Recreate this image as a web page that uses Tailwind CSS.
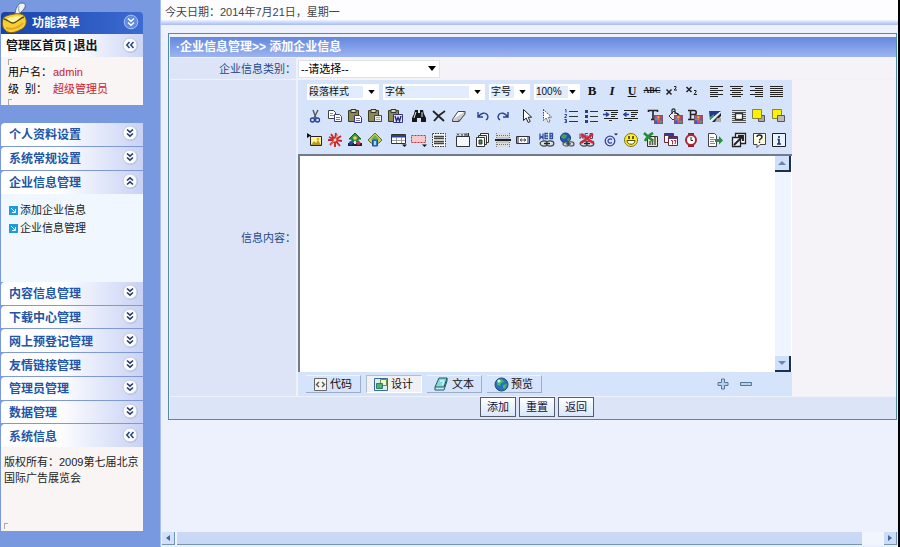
<!DOCTYPE html>
<html lang="zh-CN">
<head>
<meta charset="utf-8">
<meta name="viewport" content="width=device-width, initial-scale=1">
<title>企业信息管理</title>
<script src="https://cdn.jsdelivr.net/npm/@tailwindcss/browser@4"></script>
</head>
<body class="flex min-h-screen bg-[#edf1fd] font-['Liberation_Sans','Noto_Sans_CJK_SC',sans-serif] text-[11px] leading-4 text-[#333]">

<!-- Shared shapes -->
<svg class="hidden" aria-hidden="true">
  <symbol id="down" viewBox="0 0 16 16"><circle cx="8.5" cy="8.5" r="7.3" fill="#a9b4d6"/><circle cx="8" cy="8" r="7" fill="#fbfcff" stroke="#c3cbe6"/><path d="M5 4.5l3 2.7 3-2.7M5 8.5l3 2.7 3-2.7" fill="none" stroke="#2b3a66" stroke-width="1.6"/></symbol>
  <symbol id="up" viewBox="0 0 16 16"><circle cx="8.5" cy="8.5" r="7.3" fill="#a9b4d6"/><circle cx="8" cy="8" r="7" fill="#fbfcff" stroke="#c3cbe6"/><path d="M5 7.5l3-2.7 3 2.7M5 11.5l3-2.7 3 2.7" fill="none" stroke="#2b3a66" stroke-width="1.6"/></symbol>
  <symbol id="left" viewBox="0 0 16 16"><circle cx="8.5" cy="8.5" r="7.3" fill="#a9b4d6"/><circle cx="8" cy="8" r="7" fill="#fbfcff" stroke="#c3cbe6"/><path d="M7.5 5l-2.7 3 2.7 3M11.5 5l-2.7 3 2.7 3" fill="none" stroke="#2b4a86" stroke-width="1.6"/></symbol>
  <symbol id="tri" viewBox="0 0 8 5"><path d="M0 0h8L4 5z" fill="#000"/></symbol>
  <symbol id="bullet" viewBox="0 0 9 9"><path d="M0 0h9v9H0z" fill="#1c9be0"/><path d="M2 2l4 4M6.5 3v3.5H3" fill="none" stroke="#fff"/></symbol>
  <symbol id="swatch" viewBox="0 0 8 8"><path d="M0 0h8v8H0z" fill="#7a5a6a"/><path d="M1 1h2v2H1z" fill="#f03a9a"/><path d="M3 1h2v2H3z" fill="#e8c040"/><path d="M5 1h2v2H5z" fill="#e04030"/><path d="M1 3h2v2H1z" fill="#40a8a0"/><path d="M3 3h2v2H3z" fill="#f07830"/><path d="M5 3h2v2H5z" fill="#a03ad0"/><path d="M1 5h2v2H1z" fill="#3858d8"/><path d="M3 5h2v2H3z" fill="#e840b0"/><path d="M5 5h2v2H5z" fill="#40b050"/></symbol>
  <symbol id="clip" viewBox="0 0 16 16"><path d="M1.5 2.5h10v11h-10z" fill="#8c8a52" stroke="#3c3c28"/><path d="M4 1.5h5v3H4z" fill="#d8d8b0" stroke="#333"/></symbol>
  <symbol id="chain" viewBox="0 0 16 8"><g fill="#ddd" fill-opacity=".5" stroke="#444" stroke-width="1.3"><ellipse cx="5" cy="4.5" rx="3.8" ry="2.6"/><ellipse cx="11" cy="4.5" rx="3.8" ry="2.6"/></g><path d="M5 4.5h6" stroke="#222" stroke-width="1.3"/></symbol>
</svg>

<aside class="flex w-40 shrink-0 flex-col bg-[#7898df] pt-3 pr-[17px] pb-4 pl-px">
  <header class="relative flex h-[22px] items-center justify-between rounded-t-sm bg-linear-to-r from-[#1742ac] to-[#3e6bd0] pr-1 pl-[31px]">
    <svg class="absolute -top-2.5 left-0 h-8 w-7" viewBox="0 0 28 32"><path d="M14 13C14 7 17 1 21 1s4 3 2 6-5 4-7 7" fill="#eef3f8" stroke="#56657c"/><path d="M18 4c-1 3 0 6 1 7" fill="none" stroke="#8a98aa"/><path d="M2 17c1-3 6-4 11-5 6-1 11 0 12 5s-1 9-6 11c-5 3-12 4-15 0-3-3-3-7-2-11z" fill="#f5cf35" stroke="#755c12"/><path d="M4 18c3-3 13-5 18-3-3 1-6 6-10 6-3 0-5-2-8-3z" fill="#fff39b"/><path d="M3 17c4 1 6 4 9 4s7-5 11-6" fill="none" stroke="#594a12" stroke-width="1.3"/><path d="M5 26c5 2 13 0 17-5" fill="none" stroke="#e4a91c" stroke-width="2"/></svg>
    <h1 class="text-xs font-bold text-white">功能菜单</h1>
    <button type="button" aria-label="收起功能菜单"><svg class="mb-0.5 size-4" viewBox="0 0 16 16"><circle cx="8" cy="8" r="6.8" fill="#5f8be0" stroke="#a9c3f5"/><path d="M5 4.5l3 2.7 3-2.7M5 8.5l3 2.7 3-2.7" fill="none" stroke="#fff" stroke-width="1.5"/></svg></button>
  </header>
  <nav class="flex h-[23px] items-center bg-linear-to-r from-white from-50% to-[#ccd5f5] pr-[5px] pl-[5px] text-xs font-bold text-[#151520]">
    <a href="#home">管理区首页</a><span class="px-0.5">|</span><a href="#logout">退出</a>
    <button type="button" class="ml-auto" aria-label="收起"><svg class="mb-0.5 size-4"><use href="#left"/></svg></button>
  </nav>
  <section class="relative h-12 bg-[#f9f5f4] px-[7px] pt-[7px] text-black">
    <span class="absolute top-0.5 left-[7px] h-1.5 w-1 border-t border-l border-[#aaa]"></span>
    <dl class="grid grid-cols-[45px_1fr] leading-[17px]">
      <dt>用户名：</dt><dd class="text-[#d02030]">admin</dd>
      <dt>级 &nbsp;别：</dt><dd class="text-[#d02030]">超级管理员</dd>
    </dl>
    <span class="absolute bottom-0 left-[7px] h-1.5 w-1 border-t border-l border-[#aaa]"></span>
  </section>

  <div class="mt-[18px] flex h-[71px] flex-col text-xs font-bold text-[#2255a8] [&>button]:flex [&>button]:flex-1 [&>button]:items-center [&>button]:justify-between [&>button]:rounded-tl-sm [&>button]:border-b [&>button]:border-[#7f98dc] [&>button]:bg-linear-to-r [&>button]:from-white [&>button]:from-40% [&>button]:to-[#c9d2f4] [&>button]:pt-px [&>button]:pr-[5px] [&>button]:pl-2 [&_svg]:mb-1 [&_svg]:size-4">
    <button type="button">个人资料设置<svg><use href="#down"/></svg></button>
    <button type="button">系统常规设置<svg><use href="#down"/></svg></button>
    <button type="button" class="border-b-0!">企业信息管理<svg><use href="#up"/></svg></button>
  </div>
  <ul class="h-[88px] bg-[#f1f7fe] px-2 pt-[7px] leading-[18px] text-[#222]">
    <li><a href="#add" class="flex items-center gap-0.5"><svg class="size-[9px]"><use href="#bullet"/></svg>添加企业信息</a></li>
    <li><a href="#manage" class="flex items-center gap-0.5"><svg class="size-[9px]"><use href="#bullet"/></svg>企业信息管理</a></li>
  </ul>
  <div class="flex h-[165px] flex-col text-xs font-bold text-[#2255a8] [&>button]:flex [&>button]:flex-1 [&>button]:items-center [&>button]:justify-between [&>button]:rounded-tl-sm [&>button]:border-b [&>button]:border-[#7f98dc] [&>button]:bg-linear-to-r [&>button]:from-white [&>button]:from-40% [&>button]:to-[#c9d2f4] [&>button]:pt-0.5 [&>button]:pr-[5px] [&>button]:pl-2 [&_svg]:mb-1 [&_svg]:size-4">
    <button type="button">内容信息管理<svg><use href="#down"/></svg></button>
    <button type="button">下载中心管理<svg><use href="#down"/></svg></button>
    <button type="button">网上预登记管理<svg><use href="#down"/></svg></button>
    <button type="button">友情链接管理<svg><use href="#down"/></svg></button>
    <button type="button">管理员管理<svg><use href="#down"/></svg></button>
    <button type="button">数据管理<svg><use href="#down"/></svg></button>
    <button type="button" class="border-b-0!">系统信息<svg><use href="#left"/></svg></button>
  </div>
  <footer class="relative grow bg-[#f9f5f4] px-[3px] pt-[7px] text-[#222]">
    <p>版权所有：2009第七届北京国际广告展览会</p>
    <span class="absolute bottom-0.5 left-[3px] h-1.5 w-1 border-t border-l border-[#aaa]"></span>
  </footer>
</aside>

<main class="flex min-w-0 grow flex-col border-r-2 border-l border-r-black border-l-[#a9bdf0]">
  <div class="h-5 bg-[#fdfdff] px-1 pt-1 text-[#444]">今天日期：2014年7月21日，星期一</div>
  <div class="h-[5px] bg-linear-to-b from-[#eef3fd] to-[#a5bbf3]"></div>

  <form class="mt-2 mr-px ml-[7px] border border-[#4f8bab] bg-[#edf2fd] pt-[3px] pl-px">
    <h2 class="flex h-5 items-center bg-linear-to-b from-[#6487df] to-[#9db4f0] px-1.5 text-xs font-bold text-white">·企业信息管理&gt;&gt; 添加企业信息</h2>

    <div class="mt-px grid grid-cols-[126px_1fr] gap-x-0.5 gap-y-px">
      <label for="category" class="flex h-[21px] items-center justify-end bg-[#dde4f8] text-[#234a8a]">企业信息类别：</label>
      <div class="flex items-center bg-[#f5f3f8]">
        <div class="relative flex h-[18px] w-[142px] items-center border border-[#dde2ee] bg-white">
          <select id="category" class="h-full w-full appearance-none px-0.5 pb-0.5 text-black"><option>--请选择--</option></select>
          <svg class="pointer-events-none absolute right-[3px] h-[5px] w-2"><use href="#tri"/></svg>
        </div>
      </div>

      <label for="content" class="flex items-center justify-end bg-[#dde4f8] text-[#234a8a]">信息内容：</label>
      <div class="bg-[#f5f3f8]">
        <div class="w-[494px] bg-[#d5e3fb]">
          <div class="h-[74px] pl-[7px] [&_button]:flex [&_button]:h-6 [&_button]:w-5 [&_button]:items-center [&_button]:justify-center [&_svg]:shrink-0" role="toolbar" aria-label="编辑工具">
            <div class="flex h-6 items-center pl-0.5 text-[10px] text-[#111] [&_button]:pb-0.5 [&_button_svg]:size-4">
              <div class="mr-0.5 flex gap-1 [&>div]:relative [&>div]:flex [&>div]:h-4 [&>div]:items-center [&>div]:bg-white [&>div]:pl-0.5 [&_select]:h-3 [&_select]:grow [&_select]:appearance-none [&_select]:bg-[#e1edfc] [&_select]:pr-3 [&_select]:leading-3 [&_svg]:pointer-events-none [&_svg]:absolute [&_svg]:right-1 [&_svg]:h-1 [&_svg]:w-[7px]">
                <div class="w-[72px]"><select aria-label="段落样式" class="mr-4 w-10 pr-0!"><option>段落样式</option></select><svg><use href="#tri"/></svg></div>
                <div class="w-[102px]"><select aria-label="字体" class="mr-4"><option>字体</option></select><svg><use href="#tri"/></svg></div>
                <div class="w-[41px]"><select aria-label="字号" class="mr-4 w-5 pr-0!"><option>字号</option></select><svg><use href="#tri"/></svg></div>
                <div class="w-[46px]"><select aria-label="缩放" class="mr-3 w-7 pr-0!"><option>100%</option></select><svg><use href="#tri"/></svg></div>
              </div>
              <button type="button" aria-label="粗体"><b class="font-['Liberation_Serif',serif] text-[13px]">B</b></button>
              <button type="button" aria-label="斜体"><b class="font-['Liberation_Serif',serif] text-[13px] italic">I</b></button>
              <button type="button" aria-label="下划线"><b class="font-['Liberation_Serif',serif] text-xs underline">U</b></button>
              <button type="button" aria-label="删除线"><b class="font-['Liberation_Serif',serif] text-[8px] line-through">ABC</b></button>
              <button type="button" aria-label="上标"><svg viewBox="0 0 16 16" fill="none" stroke="#222"><path d="M2.500 6.500l5 5m0-5l-5 5" stroke-width="1.5"/><path d="M10 3.500h2v1.500l-2 2h3"/></svg></button>
              <button type="button" aria-label="下标"><svg viewBox="0 0 16 16" fill="none" stroke="#222"><path d="M2.500 4l5 5m0-5l-5 5" stroke-width="1.5"/><path d="M10 7.500h2V9l-2 2.500h3"/></svg></button>
              <button type="button" aria-label="左对齐" class="ml-1"><svg viewBox="0 0 16 16"><path d="M2 3.500h13M2 5.500h8M2 7.500h13M2 9.500h8M2 11.500h13M2 13.500h8" stroke="#222"/></svg></button>
              <button type="button" aria-label="居中"><svg viewBox="0 0 16 16"><path d="M2 3.500h13M4 5.500h9M2 7.500h13M4 9.500h9M2 11.500h13M4 13.500h9" stroke="#222"/></svg></button>
              <button type="button" aria-label="右对齐"><svg viewBox="0 0 16 16"><path d="M2 3.500h13M7 5.500h8M2 7.500h13M7 9.500h8M2 11.500h13M7 13.500h8" stroke="#222"/></svg></button>
              <button type="button" aria-label="两端对齐"><svg viewBox="0 0 16 16"><path d="M2 3.500h13M2 5.500h13M2 7.500h13M2 9.500h13M2 11.500h13M2 13.500h13" stroke="#222"/></svg></button>
            </div>

            <div class="flex gap-1 [&>div]:flex [&_svg]:size-4">
              <div>
                <button type="button" aria-label="剪切"><svg viewBox="0 0 16 16" fill="none"><path d="M6 2l3 8M11 2L7 10" stroke="#555" stroke-width="1.4"/><circle cx="5.500" cy="12" r="2" stroke="#27408f" stroke-width="1.3"/><circle cx="10.500" cy="12" r="2" stroke="#27408f" stroke-width="1.3"/></svg></button>
                <button type="button" aria-label="复制"><svg viewBox="0 0 16 16" fill="#fff" stroke="#444"><path d="M1.500 2.500h5l2 2v6h-7z"/><path d="M3 5.500h3M3 7.500h4" stroke="#888"/><path d="M7.500 6.500h5l2 2v5h-7z" stroke="#3b3b80"/><path d="M9 9.500h4M9 11.500h4" stroke="#7778b0"/></svg></button>
                <button type="button" aria-label="粘贴"><svg viewBox="0 0 16 16"><use href="#clip" width="16" height="16"/><path d="M7.500 7.500h5l2 2v5h-7z" fill="#fff" stroke="#34347c"/><path d="M9 10.500h4M9 12.500h4" stroke="#7778b0"/></svg></button>
                <button type="button" aria-label="粘贴文本"><svg viewBox="0 0 16 16"><use href="#clip" width="16" height="16"/><path d="M7.500 7.500h7v6h-7z" fill="#eee" stroke="#444"/><path d="M9 9.500h4M9 11.500h4" stroke="#aaa"/></svg></button>
                <button type="button" aria-label="从 Word 粘贴"><svg viewBox="0 0 16 16"><use href="#clip" width="16" height="16"/><path d="M6.500 6.500h9v8h-9z" fill="#e5e5ff" stroke="#34347c"/><path d="M8 8l1.500 5L11 9.500l1.500 3.500L14 8" fill="none" stroke="#27277c" stroke-width="1.4"/></svg></button>
              </div>
              <div>
                <button type="button" aria-label="查找"><svg viewBox="0 0 16 16"><path d="M4 2h3v3h2V2h3l1 4 2 4v4h-5v-4H6v4H1v-4l2-4z" fill="#171717"/><path d="M5 4L3 10M11 4v5" stroke="#ddd"/></svg></button>
                <button type="button" aria-label="删除"><svg viewBox="0 0 16 16"><path d="M2 3l11 10M14 3C9 6 6 9 3 13" fill="none" stroke="#222" stroke-width="1.8"/></svg></button>
                <button type="button" aria-label="清除格式"><svg viewBox="0 0 16 16" fill="#fff" stroke="#444"><path d="M7 3.500h7l-6 8H1.500z"/><path d="M1.500 11.500v2H8l6-7.500V3.500M8 11.500v2" fill="#ccc"/></svg></button>
              </div>
              <div>
                <button type="button" aria-label="撤销"><svg viewBox="0 0 16 16" fill="none" stroke="#27408f" stroke-width="1.400"><path d="M3 4v5h5M3.500 8.500C6 5 10 4 12 6.500S12.500 11 11 12"/></svg></button>
                <button type="button" aria-label="重做"><svg viewBox="0 0 16 16" fill="none" stroke="#27408f" stroke-width="1.400"><path d="M13 4v5H8M12.500 8.500C10 5 6 4 4 6.500S3.500 11 5 12"/></svg></button>
              </div>
              <div>
                <button type="button" aria-label="选择"><svg viewBox="0 0 16 16"><path d="M4.500 1.500v11l2.700-2.500 2 4.500 2-1-2-4.300h3.500z" fill="#fff" stroke="#222"/></svg></button>
                <button type="button" aria-label="取消选择"><svg viewBox="0 0 16 16"><path d="M4.500 1.500v11l2.700-2.500 2 4.500 2-1-2-4.300h3.500z" fill="#fff" stroke="#444" stroke-dasharray="1.500 1"/></svg></button>
              </div>
              <div>
                <button type="button" aria-label="编号列表"><svg viewBox="0 0 16 16"><path d="M6 3.500h9M6 8.500h9M6 13.500h9" stroke="#333"/><path d="M2 1.500h1v3M1.500 6.500h2v1.500l-2 1.500h2M1.500 11.500h2v3h-2M2 13h1.500" fill="none" stroke="#27408f"/></svg></button>
                <button type="button" aria-label="项目符号"><svg viewBox="0 0 16 16"><path d="M7 3.500h8M7 8.500h8M7 13.500h8" stroke="#333"/><path d="M2 2h3v3H2zM2 7h3v3H2zM2 12h3v3H2z" fill="#27408f"/></svg></button>
                <button type="button" aria-label="增加缩进"><svg viewBox="0 0 16 16"><path d="M1 2.500h14M8 4.500h7M8 6.500h6M8 8.500h4M1 10.500h14M6 12.500h3" stroke="#222" stroke-width="1.200"/><path d="M0 6.500h5M3 4.500l2.500 2L3 8.500" fill="none" stroke="#27408f" stroke-width="1.600"/></svg></button>
                <button type="button" aria-label="减少缩进"><svg viewBox="0 0 16 16"><path d="M1 2.500h14M8 4.500h7M8 6.500h6M8 8.500h4M1 10.500h14M6 12.500h3" stroke="#222" stroke-width="1.200"/><path d="M6 6.500H1M3.500 4.500L1 6.500l2.500 2" fill="none" stroke="#27408f" stroke-width="1.600"/></svg></button>
              </div>
              <div>
                <button type="button" aria-label="文字颜色"><svg viewBox="0 0 16 16"><path d="M1.500 4V2.500h9V4M6 2.500V11M4 11.500h4" fill="none" stroke="#222" stroke-width="1.600"/><use href="#swatch" x="7" y="7" width="9" height="9"/></svg></button>
                <button type="button" aria-label="背景颜色"><svg viewBox="0 0 16 16"><path d="M7 3L2 8l4 4 5-5z" fill="#eee" stroke="#333"/><path d="M5 6V2c0-1.500 3-1.500 3 0v4M9 5c3 1 3 2 3 4" fill="none" stroke="#222" stroke-width="1.200"/><use href="#swatch" x="7" y="7" width="9" height="9"/></svg></button>
                <button type="button" aria-label="文字底色"><svg viewBox="0 0 16 16"><path d="M1 2.500h6c3 0 3 4 0 4H4M3.500 2.500V11M1 11.500h6c3.500 0 3.500-5 0-5" fill="none" stroke="#222" stroke-width="1.500"/><use href="#swatch" x="7" y="7" width="9" height="9"/></svg></button>
                <button type="button" aria-label="背景图片"><svg viewBox="0 0 16 16"><path d="M2 3h12L3 12z" fill="#23378d"/><path d="M3 9l4-3v3l-4 4z" fill="#3aa04a"/><path d="M13 4L3 13" stroke="#fff"/><path d="M14 5v3L8 14H5z" fill="#222"/><path d="M10 10h4v4H8z" fill="#aaa"/></svg></button>
              </div>
              <div>
                <button type="button" aria-label="图文混排"><svg viewBox="0 0 16 16"><path d="M1 2.500h14M1 4.500h14M1 6.500h3M12 6.500h3M1 8.500h3M12 8.500h3M1 10.500h3M12 10.500h3M1 12.500h14M1 14.500h14" stroke="#555"/><path d="M4.500 5.500h7v6h-7z" fill="#fff" stroke="#333" stroke-width="1.300"/></svg></button>
                <button type="button" aria-label="上移一层"><svg viewBox="0 0 16 16"><path d="M7.500 7.500h6v6h-6z" fill="#aaa" stroke="#555"/><path d="M1.500 1.500h9v9h-9z" fill="#fff200" stroke="#85823a"/></svg></button>
                <button type="button" aria-label="下移一层"><svg viewBox="0 0 16 16"><path d="M1.500 1.500h9v9h-9z" fill="#fff200" stroke="#85823a"/><path d="M6.500 7.500h7v6h-7z" fill="#bbb" stroke="#555"/></svg></button>
              </div>
            </div>

            <div class="flex gap-1 [&>div]:flex [&_svg]:size-4">
              <div>
                <button type="button" aria-label="插入图片"><svg viewBox="0 0 16 16"><path d="M0 1l4 2.500L0 6z" fill="#111"/><path d="M3.500 4.500h11v9h-11z" fill="#fff4a0" stroke="#222"/><path d="M4 13l3-4 2 2 2-3 3 5z" fill="#b99b1c"/><circle cx="11" cy="7" r="1.300" fill="#e3b100"/><path d="M1 3.500h3" stroke="#111"/></svg></button>
                <button type="button" aria-label="插入 Flash"><svg viewBox="0 0 16 16"><path d="M8 8L4 2M8 8l1-7M8 8l6-4M8 8l7 1M8 8l5 6M8 8l0 7M8 8l-5 5M8 8L1 8M8 8L2 5" stroke="#cf2626" stroke-width="1.900"/><path d="M8 8l3-6M8 8l-5 6" stroke="#f38c72"/><circle cx="8" cy="8" r="1.500" fill="#ffe3d0"/></svg></button>
                <button type="button" aria-label="插入媒体"><svg viewBox="0 0 16 16"><path d="M8 1l6 6h-3v3H5V7H2z" fill="#2f9c45" stroke="#1c5427"/><path d="M1 11h14v3H1z" fill="#222"/><circle cx="8" cy="6" r="1.800" fill="#f2d13b"/><circle cx="4" cy="11" r="2" fill="#2743b6"/><circle cx="11.500" cy="11" r="2" fill="#d2304a"/><path d="M7 9h2v3H7z" fill="#f0ede0"/></svg></button>
                <button type="button" aria-label="插入文件"><svg viewBox="0 0 16 16"><path d="M8 1l7 7-3 3H4L1 8z" fill="#c6cf4c" stroke="#63702d"/><path d="M8 3l4 4-4 2-4-2z" fill="#6fae4e"/><path d="M5.500 8h5v6h-5z" fill="#2b7ed3" stroke="#1c4f98"/><path d="M8 9v4" stroke="#fff" stroke-width="1.300"/></svg></button>
              </div>
              <div>
                <button type="button" aria-label="表格菜单"><svg viewBox="0 0 16 16"><path d="M.500 2.500h14v9H.500z" fill="#fff" stroke="#333"/><path d="M1 3h13v2.500H1z" fill="#2b3f91"/><path d="M1 8.500h13M5.500 5v6M10.500 5v6" stroke="#999"/><path d="M11 12.500h5L13.500 15z" fill="#111"/></svg></button>
                <button type="button" aria-label="表单菜单"><svg viewBox="0 0 16 16"><path d="M.500 3.500h14v7H.500z" fill="#f8c7c9" stroke="#b53a42" stroke-dasharray="2 1"/><path d="M11 12.500h5L13.500 15z" fill="#111"/></svg></button>
                <button type="button" aria-label="显示边框"><svg viewBox="0 0 16 16"><path d="M1.500 1.500h13v13h-13z" fill="#fff" stroke="#333" stroke-dasharray="1.500 1"/><path d="M3 4.500h10M3 6.500h10M3 9.500h10M3 11.500h10" stroke="#444" stroke-width="1.300"/></svg></button>
              </div>
              <div>
                <button type="button" aria-label="插入区域"><svg viewBox="0 0 16 16"><path d="M1.500 4.500h13v10h-13z" fill="#f3f8ff" stroke="#333"/><path d="M2 1.500l2 2m0-2l-2 2M6 1.500l1 1 1-1M7 2.500v2M10 4V1.500l1 1 1-1V4M13.500 1v3" fill="none" stroke="#333"/></svg></button>
                <button type="button" aria-label="复制页面"><svg viewBox="0 0 16 16" stroke="#333"><path d="M5.500 1.500h8v9h-8z" fill="#fff"/><path d="M3.500 3.500h8v9h-8z" fill="#e9edda"/><path d="M1.500 5.500h8v9h-8z" fill="#fff"/><path d="M4 12V8h3v4z" fill="#4d8a50"/></svg></button>
                <button type="button" aria-label="分页符"><svg viewBox="0 0 16 16"><path d="M1.500 1v5h13V1M1.500 15v-5h13v5" fill="#ddd" stroke="#777" stroke-dasharray="1 1"/><path d="M2 3.500h12M2 12.500h12" stroke="#777" stroke-dasharray="1 1"/><path d="M0 8h16" stroke="#222" stroke-width="2"/></svg></button>
                <button type="button" aria-label="分隔栏"><svg viewBox="0 0 16 16"><path d="M1.500 4.500h13v7h-13z" fill="#fff" stroke="#333"/><path d="M2 5h2v6H2zM12 5h2v6h-2z" fill="#898abd"/><path d="M5 8h6M7 6.500L5 8l2 1.500M9 6.500L11 8l-2 1.500" fill="none" stroke="#555"/></svg></button>
              </div>
              <div>
                <button type="button" aria-label="插入链接"><svg viewBox="0 0 16 16"><path d="M1 1.500v5l1.500-2L4 6.500v-5M9 1.500H6v5h3M6 4h3M11 1.500v5h2.500v-5zM11 4h2" fill="none" stroke="#30509c" stroke-width="1.300"/><use href="#chain" y="7" width="16" height="8"/></svg></button>
                <button type="button" aria-label="网络链接"><svg viewBox="0 0 16 16"><circle cx="6.500" cy="6" r="5" fill="#2455b5" stroke="#1c3673"/><path d="M4 2l4 1-1 3-3 1-2-2zM8 7l3-1-1 4z" fill="#3da552"/><use href="#chain" x="3" y="8" width="13" height="7"/></svg></button>
                <button type="button" aria-label="取消链接"><svg viewBox="0 0 16 16"><path d="M1 1.500v5l1.500-2L4 6.500v-5M9 1.500H6v5h3M6 4h3M11 1.500v5h2.500v-5z" fill="none" stroke="#6b3650"/><use href="#chain" y="7" width="16" height="8"/><path d="M2 2l12 9M14 2L2 11" stroke="#d92438" stroke-width="2.200"/></svg></button>
              </div>
              <div>
                <button type="button" aria-label="特殊符号"><svg viewBox="0 0 16 16" fill="none" stroke="#39439c"><circle cx="7" cy="9" r="4.800" stroke-width="1.300"/><path d="M9 7.500C7 6 5 7.500 5 9s2 3 4 1.500" stroke-width="1.300"/><path d="M11 1.500h4l-2 2z" fill="#222" stroke="none"/></svg></button>
                <button type="button" aria-label="表情"><svg viewBox="0 0 16 16"><circle cx="8" cy="8" r="6.500" fill="#fff01c" stroke="#7b711a"/><path d="M6 4v3M10 4v3" stroke="#222" stroke-width="1.400"/><path d="M4 8.500h8c0 5-8 5-8 0z" fill="#fff" stroke="#554b11"/></svg></button>
                <button type="button" aria-label="插入 Excel"><svg viewBox="0 0 16 16"><path d="M4.500 4.500h10v10h-10z" fill="#ece8c4" stroke="#333"/><path d="M7 13V9M9.500 13V7M12 13V5" stroke="#555" stroke-width="1.500"/><path d="M1 1l9 8M10 1C6 3 4 5 2 9" stroke="#238c38" stroke-width="2.500" fill="none"/></svg></button>
                <button type="button" aria-label="日期"><svg viewBox="0 0 16 16" fill="#fff" stroke="#6b2731"><path d="M1.500 1.500h9v9h-9z"/><path d="M2 3h8" stroke="#333e9b" stroke-width="2"/><path d="M5.500 4.500h9v9h-9z"/><path d="M6 6h8" stroke="#333e9b" stroke-width="2"/><path d="M8 8.500h1.500v4M11 8.500h2l-1 3.500" fill="none" stroke="#b92e38"/></svg></button>
                <button type="button" aria-label="时间"><svg viewBox="0 0 16 16"><path d="M5 1h6v3H5zM5 12h6v3H5z" fill="#8f202a"/><circle cx="8" cy="8" r="5" fill="#fff" stroke="#ad2631" stroke-width="2"/><path d="M8 5v3.500h2" fill="none" stroke="#222"/></svg></button>
              </div>
              <div>
                <button type="button" aria-label="导出"><svg viewBox="0 0 16 16"><path d="M1.500 1.500h6l2 2v11h-8z" fill="#fff" stroke="#444"/><path d="M3 5.500h4M3 7.500h5M3 9.500h4M3 11.500h5" stroke="#888"/><path d="M8 7h4V4l4 4.500-4 4V10H8z" fill="#2b8d3d"/></svg></button>
              </div>
              <div>
                <button type="button" aria-label="全屏"><svg viewBox="0 0 16 16"><path d="M4.500 1.500h10v10h-10z" fill="#fff" stroke="#222" stroke-width="1.300"/><path d="M1.500 5.500h8v9h-8z" fill="#eef4ff" stroke="#222" stroke-width="1.300"/><path d="M3 13l9-9M7 4h5v5" fill="none" stroke="#222" stroke-width="1.900"/></svg></button>
                <button type="button" aria-label="帮助"><svg viewBox="0 0 16 16"><path d="M2.500 1.500h12v11H9l-3 3v-3H2.500z" fill="#fffde2" stroke="#444"/><path d="M6 5c0-3 5-2.500 5 0 0 2-2.500 1.500-2.500 3.500M8.500 9.500V11" fill="none" stroke="#222" stroke-width="1.400"/></svg></button>
                <button type="button" aria-label="关于"><svg viewBox="0 0 16 16"><path d="M1.500 1.500h13v13h-13z" fill="#e9f3ff" stroke="#222"/><path d="M8 4v2M6.500 7.500H8V12M6 12h4" fill="none" stroke="#22386b" stroke-width="1.700"/></svg></button>
              </div>
            </div>
          </div>

          <div class="flex h-[218px] border-t-2 border-l-2 border-[#747b88] bg-white">
            <textarea id="content" class="grow resize-none overflow-hidden bg-white p-2 outline-none"></textarea>
            <div class="mr-px flex w-4 flex-col justify-between bg-[#eff5fe] [&>button]:flex [&>button]:h-4 [&>button]:items-center [&>button]:justify-center [&>button]:border-r-2 [&>button]:border-b-2 [&>button]:border-[#1d2f50] [&>button]:bg-[#cfe0fa]">
              <button type="button" aria-label="向上滚动"><svg class="h-1 w-2" viewBox="0 0 8 4"><path d="M0 4h8L4 0z" fill="#6a86ad"/></svg></button>
              <button type="button" aria-label="向下滚动"><svg class="h-1 w-2" viewBox="0 0 8 4"><path d="M0 0h8L4 4z" fill="#6a86ad"/></svg></button>
            </div>
          </div>

          <div class="flex h-6 items-center gap-[5px] px-2 text-[#111] [&>button]:flex [&>button]:h-[18px] [&>button]:items-center">
            <button type="button" class="w-[55px] gap-0.5 border-r border-b border-[#9cadc9] border-t border-t-[#eff5ff] pl-[7px]"><svg class="size-[15px]" viewBox="0 0 15 15"><path d="M1.500 1.500h12v12h-12z" fill="#f5f5f0" stroke="#666"/><path d="M6 5L3.500 7.500 6 10M9 5l2.500 2.500L9 10" fill="none" stroke="#555" stroke-width="1.400"/></svg>代码</button>
            <button type="button" aria-pressed="true" class="w-[56px] gap-0.5 border border-[#b5bccb] border-r-white border-b-white bg-[#f0f0f5] pl-[6px]"><svg class="size-4" viewBox="0 0 16 16"><path d="M1.500 2.500h13v12h-13z" fill="#d6eefc" stroke="#3a6b94"/><path d="M7.500 3.500h6v6h-6z" fill="#f3fbc4" stroke="#61914c"/><path d="M3.500 7.500h6v5h-6z" fill="#54ad75" stroke="#2f7d5a"/></svg>设计</button>
            <button type="button" class="w-[55px] gap-1 border-r border-b border-[#9cadc9] border-t border-t-[#eff5ff] pl-[7px]"><svg class="size-[14px]" viewBox="0 0 14 14"><path d="M5 1h8l-3 9H1z" fill="#85dbd9" stroke="#1e5860"/><path d="M1 10v3h9l3-9V1" fill="none" stroke="#1e5860"/><path d="M6 4h4L8.500 8" fill="none" stroke="#fff"/></svg>文本</button>
            <button type="button" class="w-[55px] gap-0.5 border-r border-b border-[#9cadc9] border-t border-t-[#eff5ff] pl-[7px]"><svg class="size-[15px]" viewBox="0 0 15 15"><circle cx="7.500" cy="7.500" r="6.500" fill="#2a72b8" stroke="#234c7d"/><path d="M3 3l5-1 2 3-3 1-1 3-3-1zM9 8l4-1-2 5-2-1z" fill="#48b868"/><circle cx="5" cy="4" r="1.500" fill="#caf2f4"/></svg>预览</button>
            <button type="button" aria-label="增高编辑区" class="ml-auto"><svg class="size-3" viewBox="0 0 12 12"><path d="M4.500 1v3.500H1v3h3.500V11h3V7.500H11v-3H7.500V1z" fill="#b9d0ec" stroke="#56759c"/></svg></button>
            <button type="button" aria-label="缩小编辑区" class="mr-8 ml-1.5"><svg class="h-3 w-3" viewBox="0 0 12 12"><path d="M.500 4.500h11v3H.500z" fill="#b9d0ec" stroke="#56759c"/></svg></button>
          </div>
        </div>
      </div>
    </div>
    <div class="mt-px flex h-[22px] items-start justify-center gap-[3px] bg-[#dce4f7] pl-2 text-[#111144] [&>button]:h-5 [&>button]:w-9 [&>button]:border [&>button]:border-[#555c6c] [&>button]:bg-linear-to-b [&>button]:from-white [&>button]:to-[#d9e7fa]">
      <button type="submit">添加</button>
      <button type="reset">重置</button>
      <button type="button">返回</button>
    </div>
  </form>

  <div class="mt-auto mr-px mb-0.5 ml-px flex h-[13px] bg-[#f1f6fe]">
    <button type="button" aria-label="向左滚动" class="mr-0.5 flex w-[13px] items-center justify-center border-r border-b border-[#6f94bd] bg-[#d3e1f8]"><svg class="h-1.5 w-1" viewBox="0 0 4 6"><path d="M4 0v6L0 3z" fill="#3e67a5"/></svg></button>
    <div class="mr-[22px] grow border-b border-[#6f94bd] bg-linear-to-b from-[#cdd8f5] to-[#c4d8f4]"></div>
    <button type="button" aria-label="向右滚动" class="flex w-[13px] items-center justify-center border-r border-b border-[#6f94bd] bg-[#cddcf5]"><svg class="h-1.5 w-1" viewBox="0 0 4 6"><path d="M0 0v6l4-3z" fill="#3e67a5"/></svg></button>
  </div>
</main>
</body>
</html>
